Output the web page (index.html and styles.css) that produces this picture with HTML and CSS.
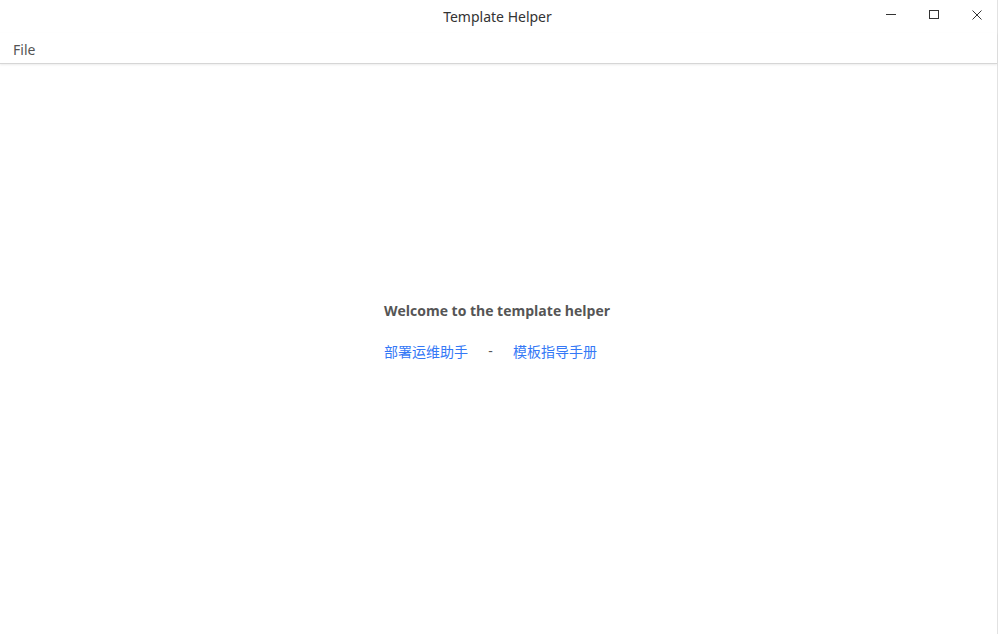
FILE: index.html
```html
<!DOCTYPE html>
<html>
<head>
<meta charset="utf-8">
<link rel="stylesheet" href="styles.css">
</head>
<body>
<div class="window">
  <header class="titlebar">
    <div class="title">Template Helper</div>
    <div class="controls">
      <button class="ctl"><svg width="10" height="10" viewBox="0 0 10 10"><path d="M0 4.5h10" stroke="#333" stroke-width="1"/></svg></button>
      <button class="ctl"><svg width="10" height="10" viewBox="0 0 10 10"><rect x="0.5" y="0.5" width="9" height="8" fill="none" stroke="#333" stroke-width="1"/></svg></button>
      <button class="ctl"><svg width="10" height="10" viewBox="0 0 10 10"><path d="M0.5 0.5l9 9M9.5 0.5l-9 9" stroke="#333" stroke-width="1"/></svg></button>
    </div>
  </header>
  <nav class="menubar"><span class="menu-item">File</span></nav>
  <main class="content">
    <div class="welcome">
      <h1 class="heading">Welcome to the template helper</h1>
      <div class="links">
        <a class="link">部署运维助手</a>
        <span class="sep">-</span>
        <a class="link">模板指导手册</a>
      </div>
    </div>
  </main>
</div>
</body>
</html>
```
FILE: styles.css
```css
* { box-sizing: border-box; }
html, body { margin: 0; padding: 0; height: 100%; }
body {
  font-family: "Open Sans", "Noto Sans", "Noto Sans CJK SC", sans-serif;
  background: #fff;
  color: #333;
}
.window {
  height: 634px;
  display: flex;
  flex-direction: column;
  border-right: 1px solid #e2e2e2;
}
.titlebar {
  height: 33px;
  position: relative;
  display: flex;
  align-items: center;
  justify-content: center;
}
.title {
  font-family: "Noto Sans", sans-serif;
  font-size: 14px;
  color: #333;
  margin-top: -1px;
  margin-left: -2px;
}
.controls {
  position: absolute;
  right: 15px;
  top: 10px;
  display: flex;
  gap: 33px;
}
.ctl {
  width: 10px;
  height: 10px;
  padding: 0;
  border: 0;
  background: none;
  display: flex;
}
.menubar {
  height: 31px;
  display: flex;
  align-items: center;
  padding: 3px 13px 0;
  border-bottom: 1px solid #d6d6d6;
  box-shadow: 0 1px 2px rgba(0,0,0,0.08);
  position: relative;
  z-index: 1;
}
.menu-item {
  font-family: "Noto Sans", sans-serif;
  font-size: 14px;
  color: #555;
}
.content {
  flex: 1;
  display: flex;
  justify-content: center;
  padding-top: 237px;
}
.welcome {
  display: flex;
  flex-direction: column;
  align-items: flex-start;
  margin-left: -3px;
}
.heading {
  margin: 0;
  font-size: 14px;
  font-weight: 700;
  color: #555;
  line-height: 20px;
}
.links {
  margin-top: 20px;
  display: flex;
  align-items: center;
  font-family: "Noto Sans CJK SC", sans-serif;
  font-size: 14px;
  line-height: 20px;
}
.link { color: #3478f6; text-decoration: none; }
.sep { color: #555; width: 45px; text-align: center; font-family: "Open Sans", sans-serif; }
```
